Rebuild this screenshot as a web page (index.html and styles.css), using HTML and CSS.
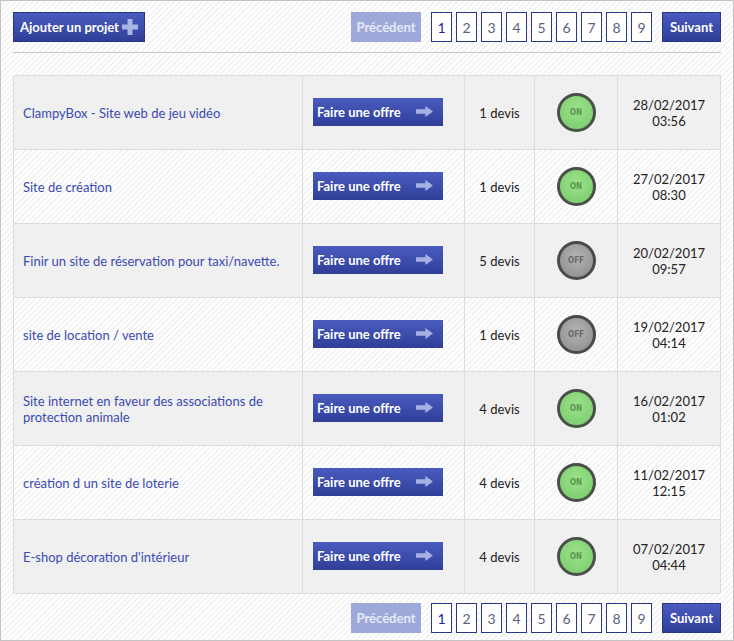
FILE: index.html
```html
<!DOCTYPE html>
<html lang="fr">
<head>
    <meta charset="UTF-8">
    <meta name="viewport" content="width=device-width, initial-scale=1.0">
    <title>Projets</title>
    <link rel="stylesheet" href="styles.css">
</head>
<body>
<div class="frame">
    <div class="toolbar">
        <a href="#" class="btn btn-add">Ajouter un projet
            <svg class="plus" width="16" height="16" viewBox="0 0 16 16"><path d="M5.5 0h5v5.5H16v5h-5.5V16h-5v-5.5H0v-5h5.5z" fill="#aab4e4"/></svg>
        </a>
        <div class="pager">
            <span class="btn btn-disabled">Précédent</span>
            <div class="pages">
                <a href="#" class="page current">1</a>
                <a href="#" class="page">2</a>
                <a href="#" class="page">3</a>
                <a href="#" class="page">4</a>
                <a href="#" class="page">5</a>
                <a href="#" class="page">6</a>
                <a href="#" class="page">7</a>
                <a href="#" class="page">8</a>
                <a href="#" class="page">9</a>
            </div>
            <a href="#" class="btn">Suivant</a>
        </div>
    </div>
    <hr class="sep">

    <table class="projects">
        <tr>
            <td class="title"><a href="#">ClampyBox - Site web de jeu vidéo</a></td>
            <td class="offer"><a href="#" class="btn btn-offer">Faire une offre <span class="arrow"></span></a></td>
            <td class="devis">1 devis</td>
            <td class="state"><span class="led on">ON</span></td>
            <td class="date">28/02/2017<br>03:56</td>
        </tr>
        <tr>
            <td class="title"><a href="#">Site de création</a></td>
            <td class="offer"><a href="#" class="btn btn-offer">Faire une offre <span class="arrow"></span></a></td>
            <td class="devis">1 devis</td>
            <td class="state"><span class="led on">ON</span></td>
            <td class="date">27/02/2017<br>08:30</td>
        </tr>
        <tr>
            <td class="title"><a href="#">Finir un site de réservation pour taxi/navette.</a></td>
            <td class="offer"><a href="#" class="btn btn-offer">Faire une offre <span class="arrow"></span></a></td>
            <td class="devis">5 devis</td>
            <td class="state"><span class="led off">OFF</span></td>
            <td class="date">20/02/2017<br>09:57</td>
        </tr>
        <tr>
            <td class="title"><a href="#">site de location / vente</a></td>
            <td class="offer"><a href="#" class="btn btn-offer">Faire une offre <span class="arrow"></span></a></td>
            <td class="devis">1 devis</td>
            <td class="state"><span class="led off">OFF</span></td>
            <td class="date">19/02/2017<br>04:14</td>
        </tr>
        <tr>
            <td class="title"><a href="#">Site internet en faveur des associations de protection animale</a></td>
            <td class="offer"><a href="#" class="btn btn-offer">Faire une offre <span class="arrow"></span></a></td>
            <td class="devis">4 devis</td>
            <td class="state"><span class="led on">ON</span></td>
            <td class="date">16/02/2017<br>01:02</td>
        </tr>
        <tr>
            <td class="title"><a href="#">création d un site de loterie</a></td>
            <td class="offer"><a href="#" class="btn btn-offer">Faire une offre <span class="arrow"></span></a></td>
            <td class="devis">4 devis</td>
            <td class="state"><span class="led on">ON</span></td>
            <td class="date">11/02/2017<br>12:15</td>
        </tr>
        <tr>
            <td class="title"><a href="#">E-shop décoration d'intérieur</a></td>
            <td class="offer"><a href="#" class="btn btn-offer">Faire une offre <span class="arrow"></span></a></td>
            <td class="devis">4 devis</td>
            <td class="state"><span class="led on">ON</span></td>
            <td class="date">07/02/2017<br>04:44</td>
        </tr>
    </table>

    <div class="toolbar bottom">
        <div class="pager">
            <span class="btn btn-disabled">Précédent</span>
            <div class="pages">
                <a href="#" class="page current">1</a>
                <a href="#" class="page">2</a>
                <a href="#" class="page">3</a>
                <a href="#" class="page">4</a>
                <a href="#" class="page">5</a>
                <a href="#" class="page">6</a>
                <a href="#" class="page">7</a>
                <a href="#" class="page">8</a>
                <a href="#" class="page">9</a>
            </div>
            <a href="#" class="btn">Suivant</a>
        </div>
    </div>
</div>
</body>
</html>
```

FILE: styles.css
```css
* {
    box-sizing: border-box;
}
body {
    margin: 0;
    font-family: Lato, "Liberation Sans", sans-serif;
    font-size: 13px;
    color: #222;
}
a {
    text-decoration: none;
}
.frame {
    height: 641px;
    border: 1px solid #c4c4c4;
    padding: 11px 12px 0 12px;
    background: repeating-linear-gradient(135deg, #ffffff 0 2px, #f4f4f4 2px 4px);
}
.toolbar {
    display: flex;
    justify-content: space-between;
    align-items: center;
    height: 30px;
}
.toolbar.bottom {
    justify-content: flex-end;
    margin-top: 9px;
}
.btn {
    display: inline-flex;
    align-items: center;
    height: 30px;
    padding: 0 7px;
    color: #fff;
    font-weight: bold;
    font-size: 13px;
    background: linear-gradient(#4a5bbf, #2f3f98);
    border: 1px solid #2a367f;
}
.btn-add {
    padding: 0 6px;
    gap: 3px;
}
.btn-disabled {
    width: 70px;
    justify-content: center;
    background: #9ea9da;
    border-color: #9ea9da;
    color: #e6e9f6;
}
.pager {
    display: flex;
    align-items: center;
    gap: 10px;
}
.pages {
    display: flex;
    gap: 4px;
}
.page {
    width: 21px;
    height: 30px;
    display: flex;
    align-items: center;
    justify-content: center;
    background: #fff;
    border: 1px solid #2b3784;
    color: #59617f;
    font-size: 14px;
}
.page.current {
    color: #1a22b0;
}
.sep {
    margin: 10px 0 22px 0;
    border: none;
    border-top: 1px solid #c8c8c8;
}
.projects {
    width: 100%;
    border-collapse: collapse;
}
.projects td {
    height: 74px;
    border: 1px solid #dcdcdc;
    padding: 0 9px;
    vertical-align: middle;
}
.projects tr:nth-child(odd) td {
    background: #f0f0f0;
}
.title {
    width: 289px;
}
.title a {
    color: #3b4ab2;
    line-height: 16px;
}
.offer {
    width: 162px;
}
.offer.offer {
    padding-left: 10px;
}
.btn-offer {
    width: 130px;
    height: 28px;
    padding: 0 4px;
    justify-content: space-between;
    border: none;
    margin-bottom: 2px;
}
.arrow {
    width: 17px;
    height: 11px;
    margin-right: 6px;
    background: #a6b0e2;
    clip-path: polygon(0 30%, 55% 30%, 55% 0, 100% 50%, 55% 100%, 55% 70%, 0 70%);
}
.devis {
    width: 70px;
    text-align: center;
}
.state {
    width: 83px;
    text-align: center;
}
.led {
    display: inline-flex;
    align-items: center;
    justify-content: center;
    width: 39px;
    height: 39px;
    border-radius: 50%;
    border: 3px solid #4a4f4a;
    font-family: "DejaVu Sans Condensed", sans-serif;
    font-size: 8px;
    font-weight: bold;
    vertical-align: middle;
}
.led.on {
    background: radial-gradient(circle at 50% 40%, #9be38c, #78c96a);
    color: #5a9250;
}
.led.off {
    background: radial-gradient(circle at 50% 40%, #b4b4b4, #8a8a8a);
    color: #666;
    border-color: #4a4a4a;
}
.date {
    text-align: center;
    line-height: 16px;
}
```
